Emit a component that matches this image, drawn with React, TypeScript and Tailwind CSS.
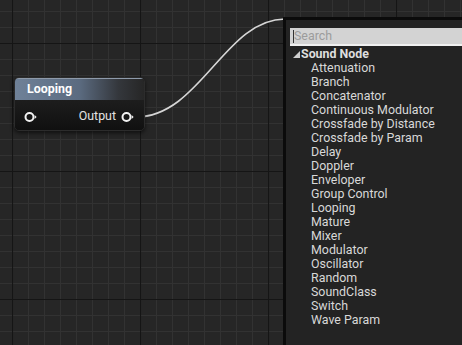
import React from "react";

const items = [
  "Attenuation",
  "Branch",
  "Concatenator",
  "Continuous Modulator",
  "Crossfade by Distance",
  "Crossfade by Param",
  "Delay",
  "Doppler",
  "Enveloper",
  "Group Control",
  "Looping",
  "Mature",
  "Mixer",
  "Modulator",
  "Oscillator",
  "Random",
  "SoundClass",
  "Switch",
  "Wave Param",
];

function Grid() {
  return (
    <svg className="absolute inset-0" width="462" height="345">
      <defs>
        <pattern id="minor" x="12" y="11" width="16" height="16" patternUnits="userSpaceOnUse">
          <path d="M0 0.5H16M0.5 0V16" stroke="#323232" strokeWidth="1" fill="none" />
        </pattern>
        <pattern id="major" x="12" y="43" width="128" height="128" patternUnits="userSpaceOnUse">
          <path d="M0 0.5H128M0.5 0V128" stroke="#151515" strokeWidth="1.2" fill="none" />
        </pattern>
      </defs>
      <rect width="462" height="345" fill="#262626" />
      <rect width="462" height="345" fill="url(#minor)" />
      <rect width="462" height="345" fill="url(#major)" />
    </svg>
  );
}

function Pin() {
  return (
    <svg width="14" height="12" viewBox="0 0 14 12">
      <circle cx="5.5" cy="6" r="4" stroke="#f2f2f2" strokeWidth="2" fill="none" />
      <path d="M10.6 4L12.6 6L10.6 8Z" fill="#f2f2f2" />
    </svg>
  );
}

export default function App() {
  return (
    <div
      className="relative w-[462px] h-[345px] overflow-hidden bg-[#262626]"
      style={{ fontFamily: "Roboto, 'Open Sans', sans-serif" }}
    >
      <Grid />
      <svg className="absolute inset-0" width="462" height="345">
        <path
          d="M136 117 C 200 117, 225 19, 285 19"
          stroke="#d6d6d6"
          strokeWidth="1.6"
          fill="none"
        />
      </svg>

      {/* Node */}
      <div className="absolute left-[14px] top-[77px] w-[131px] h-[54px] rounded-[5px] bg-[#141414] border border-[#2c2c2c] shadow-[0_2px_4px_rgba(0,0,0,0.6)] overflow-hidden flex flex-col">
        <div className="h-[22px] bg-[linear-gradient(90deg,#6f8198_0%,#5b6b80_50%,#34373c_80%,#262626_100%)] border-t border-[#8e9aaa] flex items-center pl-[12px]">
          <span className="text-[12.4px] font-bold text-white leading-none">Looping</span>
        </div>
        <div className="flex-1 bg-[linear-gradient(180deg,#1d1d1d_0%,#101010_100%)] flex items-center justify-between pl-[9px] pr-[9px] pt-[3px]">
          <Pin />
          <div className="flex items-center gap-[5px]">
            <span className="text-[12.4px] text-[#e2e2e2] leading-none">Output</span>
            <Pin />
          </div>
        </div>
      </div>

      {/* Menu */}
      <div className="absolute left-[283px] top-[17px] w-[179px] h-[328px] bg-[#232323] border-l-[3px] border-t-[3px] border-[#0b0b0b]">
        <div className="ml-[4px] mt-[8px] h-[18px] bg-[#d3d3d3] border-b-2 border-[#f0f0f0] flex items-center pl-[3px]">
          <span className="w-px h-[13px] bg-[#333]"></span>
          <span className="text-[12.4px] text-[#9c9c9c] leading-none">Search</span>
        </div>
        <div className="flex items-center h-[14px] mt-[1px] pl-[7px]">
          <svg width="7" height="7" viewBox="0 0 7 7" className="mr-[1px]">
            <path d="M7 0L7 7L0 7Z" fill="#cfcfcf" />
          </svg>
          <span className="text-[12.4px] font-bold text-[#dedede] leading-none">Sound Node</span>
        </div>
        <div className="flex flex-col pl-[25px]">
          {items.map((t) => (
            <div key={t} className="h-[14px] flex items-center text-[12.4px] text-[#d8d8d8] leading-none">
              {t}
            </div>
          ))}
        </div>
      </div>
    </div>
  );
}
